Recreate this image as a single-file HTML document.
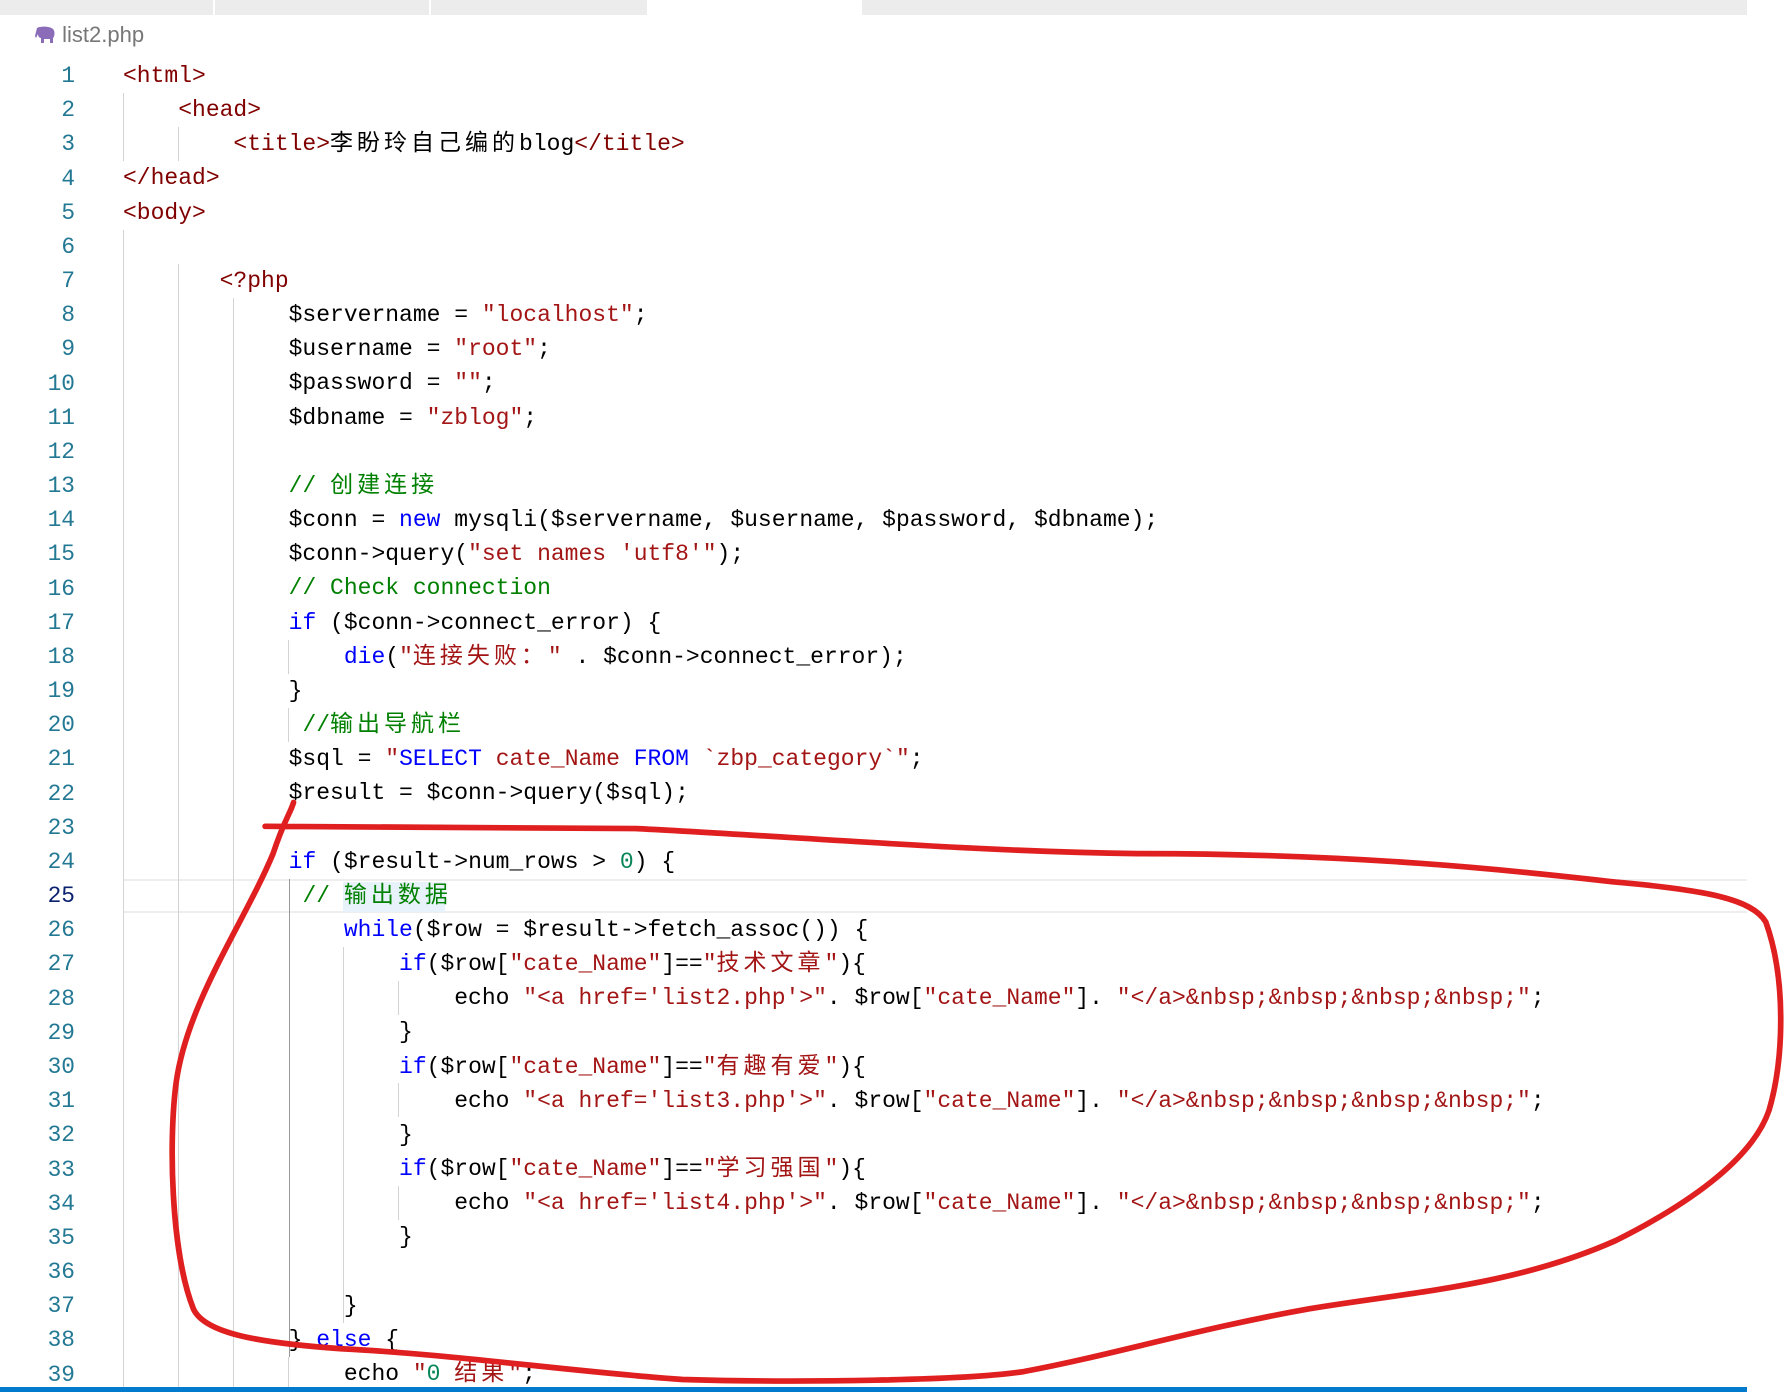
<!DOCTYPE html>
<html><head><meta charset="utf-8"><style>
body{margin:0;width:1784px;height:1392px;background:#fff;position:relative;overflow:hidden;font-family:"Liberation Mono","Noto Sans CJK SC",monospace;}
.tb{position:absolute;top:0;height:15px;background:#ececec}
.fn{position:absolute;left:34px;top:22px;font:22px "Liberation Sans",sans-serif;color:#777}
.ln{position:absolute;left:0;width:75px;text-align:right;font-size:22.8px;color:#237893;line-height:34.17px}
.code{position:absolute;left:123px;font-size:23px;line-height:34.17px;white-space:normal;color:#000}
.code div{height:34.17px;overflow:visible;white-space:pre}
.t{color:#800000}.s{color:#a31515}.k{color:#0000ff}.c{color:#008000}.n{color:#098658}
.z{letter-spacing:4px;font-family:"Noto Sans CJK SC",sans-serif;line-height:0}
.g{position:absolute;width:1px;background:#d3d3d3}
</style></head><body>
<div class="tb" style="left:0;width:213px"></div><div class="tb" style="left:215px;width:214px"></div><div class="tb" style="left:431px;width:216px"></div>
<div class="tb" style="left:862px;width:885px"></div>
<div class="fn"><svg width="22" height="18" viewBox="0 0 22 18" style="vertical-align:-2px"><path d="M3,2 C6,0 16,0 19,3 C21,5 21,10 19,12 L19,17 L16,17 L16,13 L10,13 L10,17 L7,17 L7,12 C5,12 4,10 4,8 L2,12 L1,10 Z" fill="#8a6cb8"/></svg> list2.php</div>
<div style="position:absolute;left:123px;top:879px;width:1624px;height:30px;border-top:2px solid #eee;border-bottom:2px solid #eee"></div>
<div style="position:absolute;left:343px;top:882px;width:102px;height:30px;background:#e8f2fb"></div>
<div class="g" style="left:123px;top:93px;height:68px"></div>
<div class="g" style="left:123px;top:230px;height:1158px"></div>
<div class="g" style="left:178px;top:127px;height:34px"></div>
<div class="g" style="left:178px;top:264px;height:1124px"></div>
<div class="g" style="left:233px;top:298px;height:1090px"></div>
<div class="g" style="left:288px;top:640px;height:34px"></div>
<div class="g" style="left:288px;top:708px;height:34px"></div>
<div class="g" style="left:289px;top:879px;height:478px;background:#999"></div>
<div class="g" style="left:343px;top:947px;height:376px"></div>
<div class="g" style="left:398px;top:981px;height:34px"></div>
<div class="g" style="left:398px;top:1083px;height:34px"></div>
<div class="g" style="left:398px;top:1186px;height:34px"></div>
<div class="g" style="left:288px;top:1357px;height:31px"></div>
<div class="ln" style="top:59px">1<br>2<br>3<br>4<br>5<br>6<br>7<br>8<br>9<br>10<br>11<br>12<br>13<br>14<br>15<br>16<br>17<br>18<br>19<br>20<br>21<br>22<br>23<br>24<br><span style="color:#0b216f">25</span><br>26<br>27<br>28<br>29<br>30<br>31<br>32<br>33<br>34<br>35<br>36<br>37<br>38<br>39</div>
<div class="code" style="top:59px"><div><span class="t">&lt;html&gt;</span></div>
<div>    <span class="t">&lt;head&gt;</span></div>
<div>        <span class="t">&lt;title&gt;</span><span class="z">李盼玲自己编的</span>blog<span class="t">&lt;/title&gt;</span></div>
<div><span class="t">&lt;/head&gt;</span></div>
<div><span class="t">&lt;body&gt;</span></div>
<div></div>
<div>       <span class="t">&lt;?php</span></div>
<div>            $servername = <span class="s">"localhost"</span>;</div>
<div>            $username = <span class="s">"root"</span>;</div>
<div>            $password = <span class="s">""</span>;</div>
<div>            $dbname = <span class="s">"zblog"</span>;</div>
<div></div>
<div>            <span class="c">// <span class="z">创建连接</span></span></div>
<div>            $conn = <span class="k">new</span> mysqli($servername, $username, $password, $dbname);</div>
<div>            $conn-&gt;query(<span class="s">"set names 'utf8'"</span>);</div>
<div>            <span class="c">// Check connection</span></div>
<div>            <span class="k">if</span> ($conn-&gt;connect_error) {</div>
<div>                <span class="k">die</span>(<span class="s">"<span class="z">连接失败：</span>"</span> . $conn-&gt;connect_error);</div>
<div>            }</div>
<div>             <span class="c">//<span class="z">输出导航栏</span></span></div>
<div>            $sql = <span class="s">"<span class="k">SELECT</span> cate_Name <span class="k">FROM</span> `zbp_category`"</span>;</div>
<div>            $result = $conn-&gt;query($sql);</div>
<div></div>
<div>            <span class="k">if</span> ($result-&gt;num_rows &gt; <span class="n">0</span>) {</div>
<div>             <span class="c">// <span class="z">输出数据</span></span></div>
<div>                <span class="k">while</span>($row = $result-&gt;fetch_assoc()) {</div>
<div>                    <span class="k">if</span>($row[<span class="s">"cate_Name"</span>]==<span class="s">"<span class="z">技术文章</span>"</span>){</div>
<div>                        echo <span class="s">"&lt;a href='list2.php'&gt;"</span>. $row[<span class="s">"cate_Name"</span>]. <span class="s">"&lt;/a&gt;&amp;nbsp;&amp;nbsp;&amp;nbsp;&amp;nbsp;"</span>;</div>
<div>                    }</div>
<div>                    <span class="k">if</span>($row[<span class="s">"cate_Name"</span>]==<span class="s">"<span class="z">有趣有爱</span>"</span>){</div>
<div>                        echo <span class="s">"&lt;a href='list3.php'&gt;"</span>. $row[<span class="s">"cate_Name"</span>]. <span class="s">"&lt;/a&gt;&amp;nbsp;&amp;nbsp;&amp;nbsp;&amp;nbsp;"</span>;</div>
<div>                    }</div>
<div>                    <span class="k">if</span>($row[<span class="s">"cate_Name"</span>]==<span class="s">"<span class="z">学习强国</span>"</span>){</div>
<div>                        echo <span class="s">"&lt;a href='list4.php'&gt;"</span>. $row[<span class="s">"cate_Name"</span>]. <span class="s">"&lt;/a&gt;&amp;nbsp;&amp;nbsp;&amp;nbsp;&amp;nbsp;"</span>;</div>
<div>                    }</div>
<div></div>
<div>                }</div>
<div>            } <span class="k">else</span> {</div>
<div>                echo <span class="s">"<span class="n">0</span> <span class="z">结果</span>"</span>;</div></div>
<div style="position:absolute;left:0;top:1387px;width:1747px;height:5px;background:#007acc"></div>
<svg style="position:absolute;left:0;top:0" width="1784" height="1392" viewBox="0 0 1568 1223" preserveAspectRatio="none">
<path d="M233,726 L560,728 C700,735 850,748 1000,750 C1200,750 1330,765 1420,775 C1500,782 1540,790 1552,810 C1570,860 1568,930 1555,975 C1540,1020 1480,1060 1420,1090 C1330,1130 1240,1135 1150,1150 C1050,1168 980,1190 900,1205 C850,1213 700,1215 600,1212 C500,1205 400,1190 300,1185 C230,1180 180,1172 170,1150 C150,1100 148,1000 155,950 C165,880 215,810 240,750 C250,720 255,715 258,705" fill="none" stroke="#e02020" stroke-width="5" stroke-linecap="round"/>
</svg>
</body></html>
